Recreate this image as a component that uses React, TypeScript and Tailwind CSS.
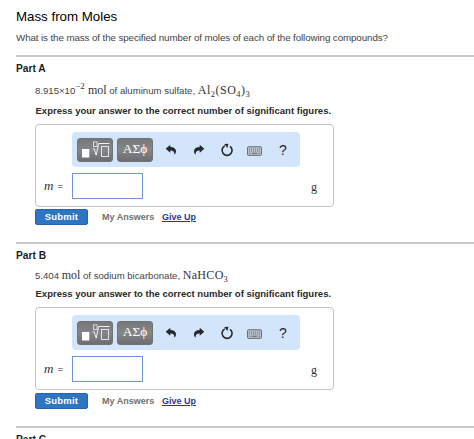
import React from 'react';

interface PartProps {
    title: string;
    promptClass: string;
    instructionClass: string;
    submitClass: string;
    className: string;
    children: React.ReactNode;
}

const TemplateIcon: React.FC = () => (
    <svg className="h-[18px] w-[30px] shrink-0" viewBox="0 0 30 18" fill="none" stroke="#f0f0f0">
        <rect x="2" y="8" width="7.3" height="8.5" fill="#fff" stroke="none" />
        <rect x="13.4" y="0.9" width="3.6" height="4.6" strokeWidth="0.8" />
        <path d="M12.8 8.2L14 7.4L16.2 14.2L18.6 2.5H29.5" strokeWidth="1" />
        <rect x="21.5" y="5.5" width="7" height="10" strokeWidth="0.9" />
    </svg>
);

const UndoIcon: React.FC<{ className?: string }> = ({ className }) => (
    <svg className={className} viewBox="0 0 12 12" fill="#25282d">
        <path d="M0.7 4.8L5.3 0.7V3C9 3.1 11 4.8 11 7.3C11 8.8 10.4 9.9 9.4 10.7C9.5 8.1 8.5 6.7 5.3 6.6V8.8Z" />
    </svg>
);

const ResetIcon: React.FC = () => (
    <svg className="h-[14px] w-[14px]" viewBox="0 0 14 14" fill="none">
        <path d="M10 3.3A5 5 0 1 1 4.8 2.9" stroke="#25282d" strokeWidth="1.6" />
        <path d="M4.2 1L8.4 0.8L7.4 5Z" fill="#25282d" />
    </svg>
);

const KeyboardIcon: React.FC = () => (
    <svg className="h-[10px] w-[15px]" viewBox="0 0 15 10" fill="none">
        <rect x="0.6" y="0.8" width="13.8" height="8.5" rx="0.7" fill="#c3cad3" stroke="#5d656f" />
        <path d="M2.2 3H13M2.2 5H13" stroke="#505862" strokeDasharray="1 0.9" />
        <path d="M2.2 7.2H3.4M4.6 7.2H10.2M11.4 7.2H12.8" stroke="#505862" />
    </svg>
);

const toolButton =
    'flex h-6 w-9 items-center justify-center rounded-[3px] border border-[#727375] bg-linear-to-b from-[#77787b] via-[#858689] to-[#6c6d70]';

const Toolbar: React.FC = () => (
    <div className="ml-9 flex h-[35px] w-[228px] items-center rounded-[4px] bg-[#d2e5fb] pl-[5px]">
        <button className={toolButton}>
            <TemplateIcon />
        </button>
        <button className={`${toolButton} ml-1 pb-[2px] font-['Liberation_Serif',serif] text-[13.5px] leading-none text-white`}>
            ΑΣϕ
        </button>
        <UndoIcon className="ml-[11.5px] h-3 w-3" />
        <UndoIcon className="ml-4 h-3 w-3 -scale-x-100" />
        <span className="ml-[15.5px]">
            <ResetIcon />
        </span>
        <span className="mt-[3px] ml-[13px]">
            <KeyboardIcon />
        </span>
        <span className="ml-[17px] text-[14px] leading-none text-[#25282d]">?</span>
    </div>
);

const Serif: React.FC<{ className?: string; children: React.ReactNode }> = ({ className = '', children }) => (
    <span className={`font-['Liberation_Serif',serif] text-[12px] text-[#333] ${className}`}>{children}</span>
);

const Sub: React.FC<{ children: React.ReactNode }> = ({ children }) => (
    <sub className="bottom-[-3px] text-[8.5px] leading-none">{children}</sub>
);

const Part: React.FC<PartProps> = ({ title, promptClass, instructionClass, submitClass, className, children }) => (
    <section className={`ml-4 border-t-2 border-[#c9c9c9] ${className}`}>
        <h2 className="pt-[5px] text-[10.2px] leading-[14px] font-bold text-[#1c1c1c]">{title}</h2>
        <div className="pl-[19px]">
            <p className={`h-4 text-[9.6px] leading-4 whitespace-nowrap text-[#444] ${promptClass}`}>{children}</p>
            <p className={`pl-[0.5px] text-[9.53px] leading-3 font-bold whitespace-nowrap text-[#2a2a2a] ${instructionClass}`}>
                Express your answer to the correct number of significant figures.
            </p>
            <div className="mt-[7px] h-[83px] w-[299px] rounded-[4px] border-[1.5px] border-[#c4c4c4] pt-[7px]">
                <Toolbar />
                <div className="mt-[6px] flex h-[26px] items-center">
                    <Serif className="ml-2 flex w-[28px] items-baseline gap-[4px]">
                        <i className="text-[13px]">m</i>
                        <span className="text-[10px]">=</span>
                    </Serif>
                    <input className="h-[26px] w-[71px] border border-[#7392dc] bg-white outline-none" />
                    <Serif className="mt-[2px] ml-[168px]">g</Serif>
                </div>
            </div>
            <div className={`flex h-4 items-center text-[9px] font-bold ${submitClass}`}>
                <button className="h-4 w-[53px] rounded-[2px] border border-[#2665a8] bg-[#2e75c2] text-[9.5px] leading-none tracking-[0.2px] text-white">
                    Submit
                </button>
                <span className="mt-[2px] ml-[14px] w-[60px] whitespace-nowrap text-[#707070]">My Answers</span>
                <a className="mt-[2px] whitespace-nowrap text-[#1c3f94] underline">Give Up</a>
            </div>
        </div>
    </section>
);

const App: React.FC = () => {
    return (
        <main className="h-[439px] w-[474px] overflow-hidden bg-white font-['Liberation_Sans',Arial,sans-serif]">
            <h1 className="ml-4 pt-2 text-[13.3px] leading-[18px] text-black">Mass from Moles</h1>
            <p className="ml-4 h-[29px] pt-[5px] text-[9.8px] leading-[14px] tracking-[-0.11px] whitespace-nowrap text-[#444]">
                What is the mass of the specified number of moles of each of the following compounds?
            </p>
            <Part
                title="Part A"
                className="h-[187px]"
                promptClass="mt-[6px]"
                instructionClass="mt-[7px]"
                submitClass="mt-[2px]"
            >
                8.915×10<Serif><sup className="top-[-5px] text-[9px] leading-none">−2</sup> mol</Serif> of aluminum
                sulfate, <Serif className="tracking-[0.5px]">Al<Sub>2</Sub>(SO<Sub>4</Sub>)<Sub>3</Sub></Serif>
            </Part>
            <Part
                title="Part B"
                className="h-[184px]"
                promptClass="mt-1"
                instructionClass="mt-[5px]"
                submitClass="mt-[3px]"
            >
                5.404 <Serif>mol</Serif> of sodium bicarbonate,{' '}
                <Serif className="tracking-[0.3px]">NaHCO<Sub>3</Sub></Serif>
            </Part>
            <section className="ml-4 border-t-2 border-[#c9c9c9]">
                <h2 className="pt-[5px] text-[10.2px] leading-[14px] font-bold text-[#1c1c1c]">Part C</h2>
            </section>
        </main>
    );
};

export default App;
